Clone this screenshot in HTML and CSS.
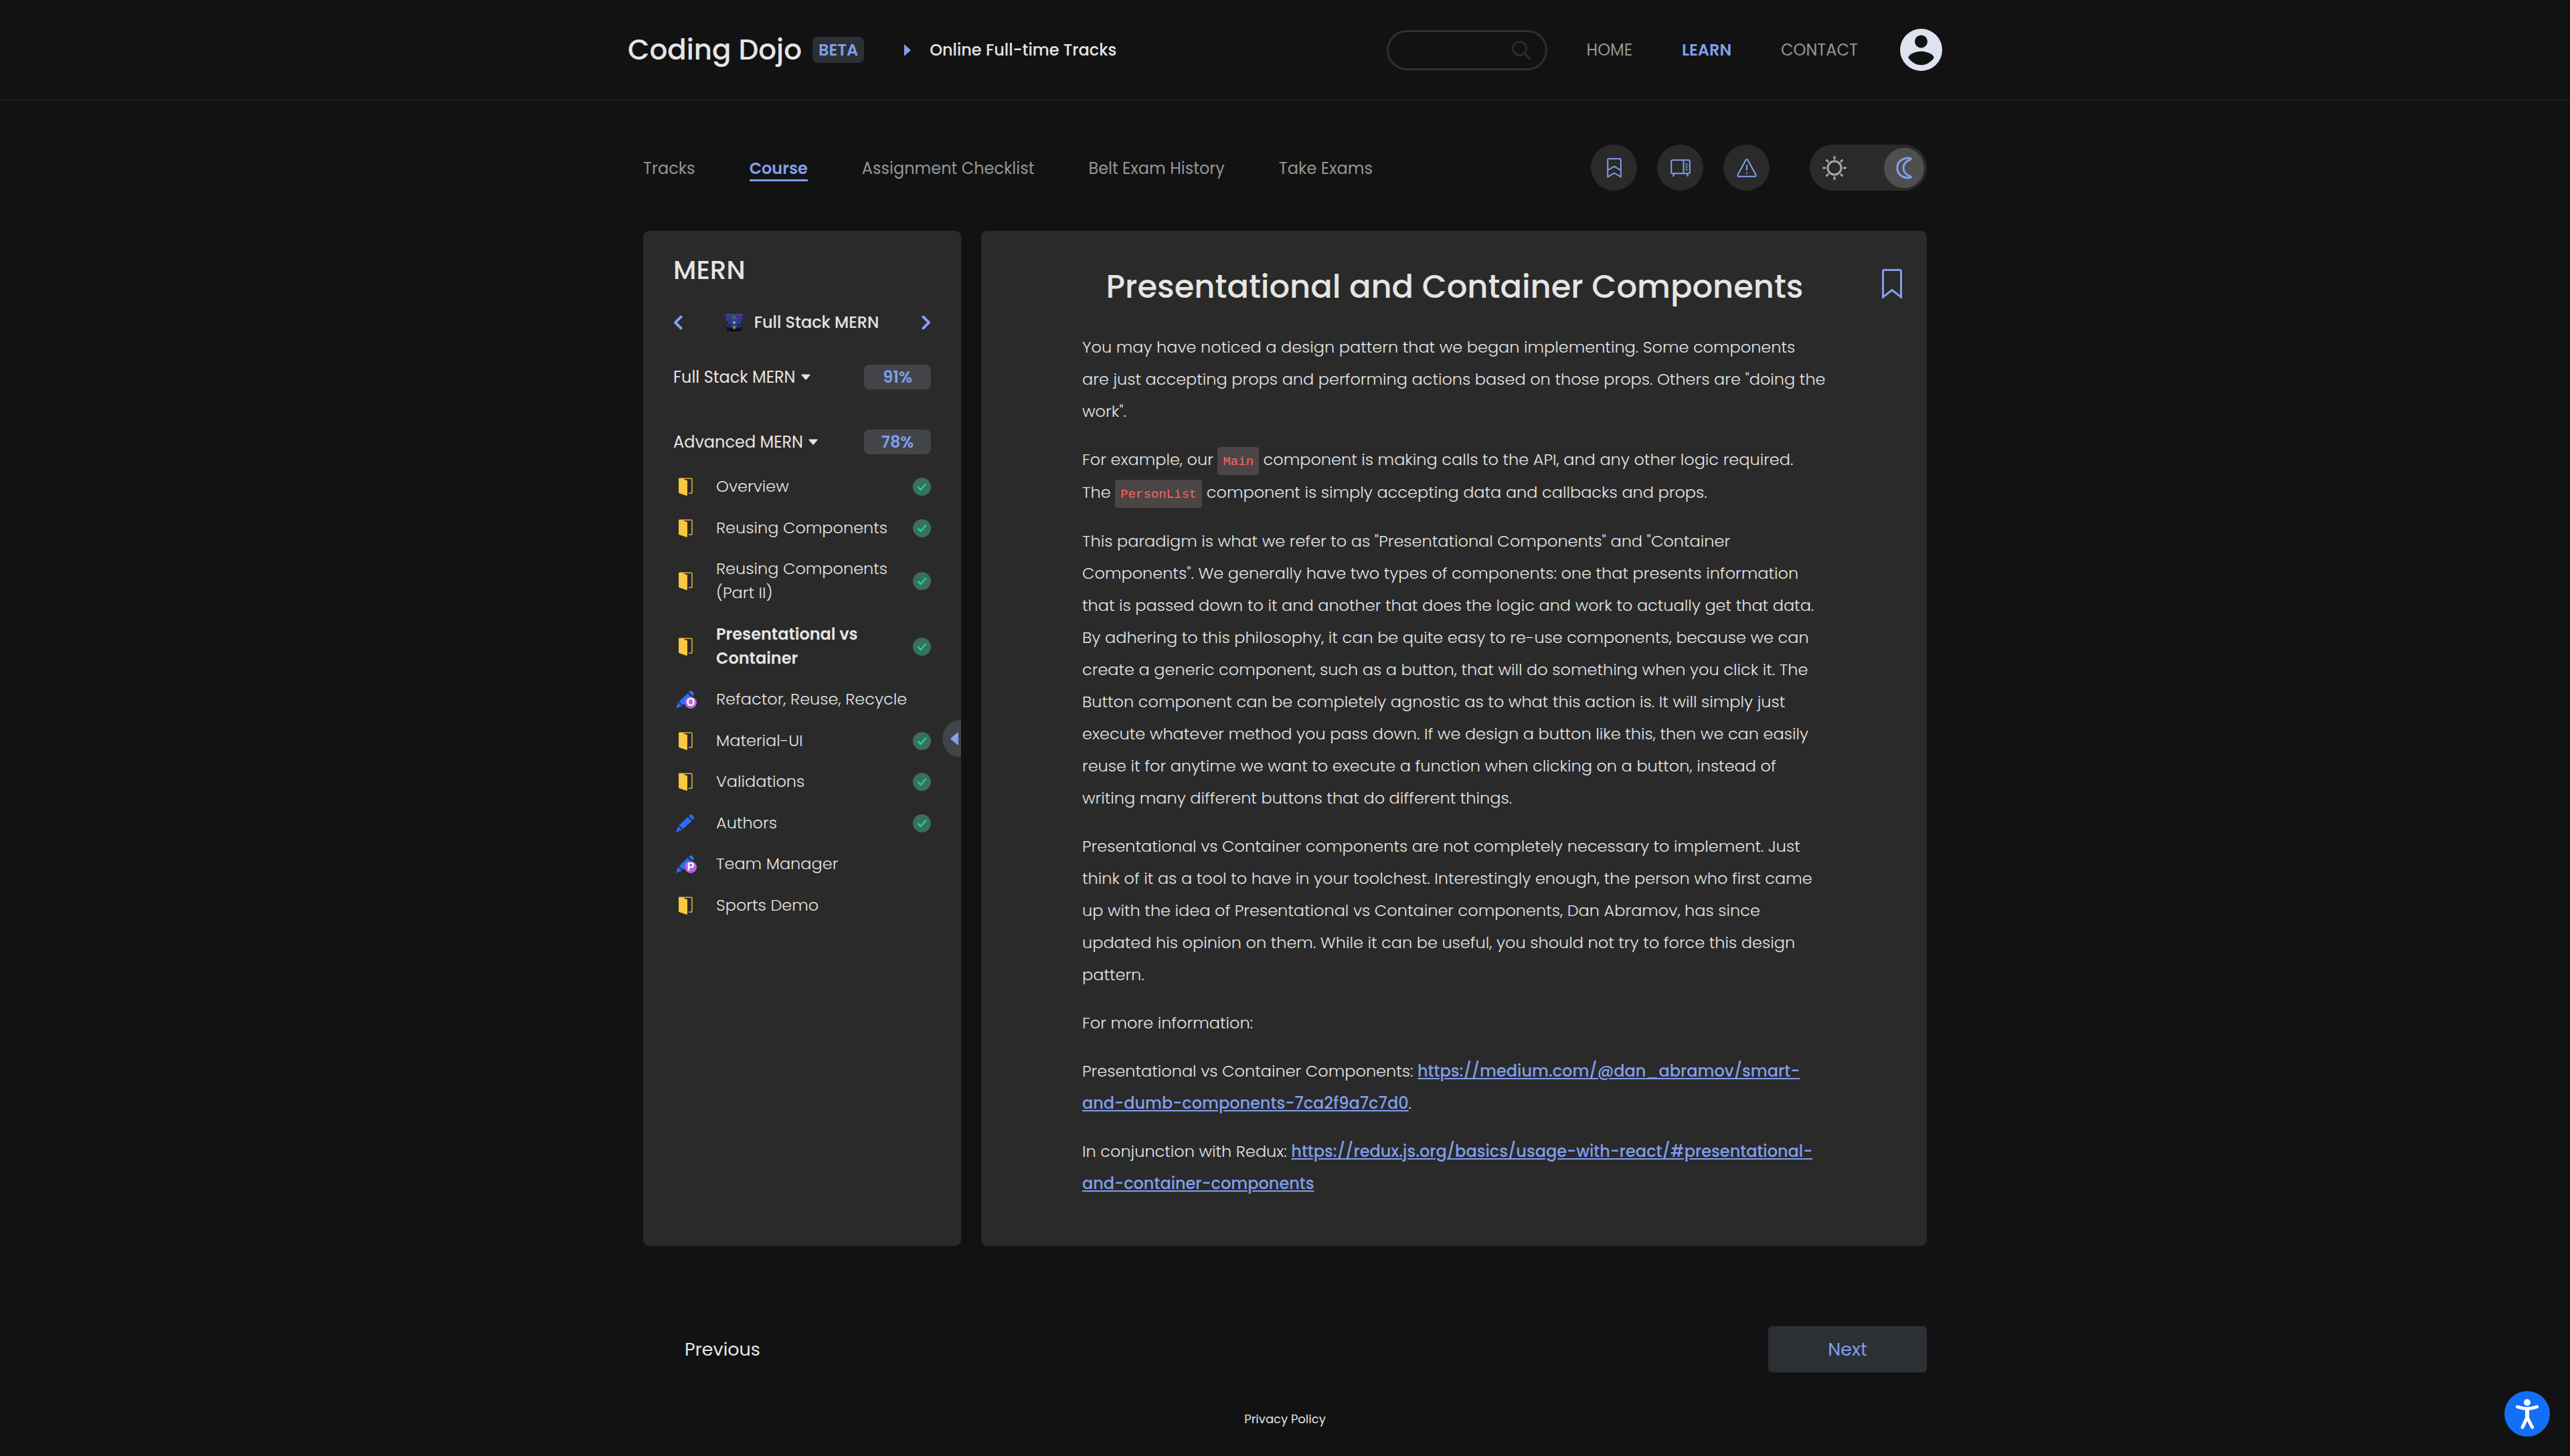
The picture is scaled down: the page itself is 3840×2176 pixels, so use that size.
FILE: index.html
```html
<!DOCTYPE html>
<html lang="en">
<head>
<meta charset="utf-8">
<meta name="viewport" content="width=device-width, initial-scale=1">
<title>Presentational and Container Components</title>
<link rel="stylesheet" href="styles.css">
</head>
<body>
<svg class="sprite" aria-hidden="true">
  <symbol id="door" viewBox="0 0 21 27">
    <path d="M2 1.2h16.800q1.200 0 1.200 1.200v19.500q0 1.300-1.300 1.300h-3.700" fill="none" stroke="#c79a35" stroke-width="1.800"/>
    <path d="M0 1.600Q0 .5 1.200.6L7 1q1 2 3.500 2.400L13 4.200V25.500q0 1.600-1.500 1.200L1.200 23.300Q0 23 0 21.800z" fill="#f9c840"/>
  </symbol>
  <symbol id="pencil" viewBox="0 0 28 28">
    <path d="M4.500 17.500L17.500 5l6 6-13 12z M19 3.600l1.700-1.700q1.500-1.400 3-.1l2.700 2.700q1.400 1.500 0 3l-1.600 1.800z M3.200 18.800l5.700 5.500L.8 27.500Q.2 27.300.4 26.500z" fill="#2d6bfa"/>
  </symbol>
  <symbol id="check" viewBox="0 0 27 27">
    <circle cx="13.500" cy="13.500" r="13.500" fill="#3b6e5f"/>
    <path d="M8 14.200l3.700 3.800 7.300-8.500" fill="none" stroke="#0bdc84" stroke-width="2.600" stroke-linecap="round" stroke-linejoin="round"/>
  </symbol>
</svg>

<header class="site-header">
  <div class="header-inner">
    <a class="brand" href="#">Coding Dojo <span class="beta">BETA</span></a>
    <svg class="crumb-arrow" viewBox="0 0 10 18" width="10" height="18" aria-hidden="true"><path d="M0 0l10 9-10 9z" fill="currentColor"/></svg>
    <span class="crumb">Online Full-time Tracks</span>
    <label class="search">
      <input type="search" aria-label="Search">
      <svg viewBox="0 0 28 28" width="28" height="28" aria-hidden="true"><circle cx="11.500" cy="11.500" r="10" /><path d="M19 19l7.500 7.500"/></svg>
    </label>
    <nav class="site-nav" aria-label="Main">
      <a href="#">HOME</a>
      <a href="#" class="active">LEARN</a>
      <a href="#">CONTACT</a>
    </nav>
    <button class="avatar" type="button" aria-label="Account">
      <svg viewBox="0 0 63 63" width="63" height="63"><circle cx="31.500" cy="31.500" r="31.500" fill="#dee4ef"/><circle cx="31.500" cy="19" r="9.500" fill="#121212"/><path d="M12.500 43.500c0-6.300 12.500-9.700 19-9.700s19 3.400 19 9.700c-4.200 6.200-11 10.700-19 10.700s-14.800-4.500-19-10.700z" fill="#121212"/></svg>
    </button>
  </div>
</header>

<div class="page">
  <div class="toolbar">
    <nav class="tabs" aria-label="Course sections">
      <a href="#">Tracks</a>
      <a href="#" class="active">Course</a>
      <a href="#">Assignment Checklist</a>
      <a href="#">Belt Exam History</a>
      <a href="#">Take Exams</a>
    </nav>
    <div class="tools">
      <button type="button" aria-label="Bookmarks"><svg viewBox="0 0 22 30" width="22" height="30"><path d="M1.200 28.500V3q0-1.800 1.800-1.800h16q1.800 0 1.800 1.800v25.500L11 22.500zM1.200 18.500L11 12.700l9.800 5.800"/></svg></button>
      <button type="button" aria-label="Recordings"><svg viewBox="0 0 30 26" width="30" height="26"><path d="M3 1.200h24q1.800 0 1.800 1.800v16.500q0 1.800-1.800 1.800H3q-1.800 0-1.800-1.800V3q0-1.800 1.800-1.800zM19.500 1.200v20M5.500 21.500L4 25M24.500 21.500L26 25"/><path class="keys" d="M24 6v12"/></svg></button>
      <button type="button" aria-label="Report a problem"><svg viewBox="0 0 30 28" width="30" height="28"><path d="M13.600 2q1.400-1.600 2.800 0l12 22q.7 2.500-1.400 2.800H3q-2.100-.3-1.400-2.800zM15 10v7M15 21.500v.500"/></svg></button>
      <label class="theme">
        <svg class="sun" viewBox="0 0 36 36" width="36" height="36" aria-hidden="true"><circle cx="18" cy="18" r="10"/><path d="M18 1.500v2.500M18 32v2.500M1.500 18H4M32 18h2.500M6.500 6.500l1.700 1.700M27.800 27.800l1.700 1.700M6.500 29.500l1.700-1.700M27.800 8.200l1.700-1.700"/></svg>
        <span class="knob"><input type="checkbox" checked aria-label="Dark mode"><svg viewBox="0 0 24 34" width="24" height="34" aria-hidden="true"><path d="M21.500 2.500C10 .5 1.800 7.500 1.800 17S10 33.500 21.500 31.500q1.500-.8 0-1.800C14.500 27 11 23 11 17S14.500 7 21.500 4.300q1.500-1 0-1.800z"/></svg></span>
      </label>
    </div>
  </div>

  <div class="panels">
    <aside class="sidebar">
      <h2>MERN</h2>
      <div class="course-switch">
        <button type="button" aria-label="Previous course"><svg viewBox="0 0 14 22" width="14" height="22"><path d="M11.500 2.500L3 11l8.500 8.500"/></svg></button>
        <span class="course-name">
          <svg viewBox="0 0 26 27" width="26" height="27" aria-hidden="true">
            <defs><linearGradient id="night" x1="0" y1="0" x2="0" y2="1"><stop offset="0" stop-color="#473d96"/><stop offset=".6" stop-color="#211c55"/><stop offset="1" stop-color="#080618"/></linearGradient></defs>
            <path d="M0 0h26l-2 25q-11 3-22 0z" fill="url(#night)"/>
            <g fill="none" stroke="#31558c" stroke-width="1.200"><ellipse cx="13" cy="13" rx="11" ry="4" transform="rotate(30 13 13)"/><ellipse cx="13" cy="13" rx="11" ry="4" transform="rotate(-30 13 13)"/><ellipse cx="13" cy="13" rx="4" ry="9"/></g>
            <circle cx="13" cy="13" r="2.200" fill="#8fa3d0"/><circle cx="13" cy="5" r="2" fill="#2f8a3c"/><circle cx="13" cy="20.500" r="2.300" fill="#8b8428"/>
          </svg>
          Full Stack MERN
        </span>
        <button type="button" aria-label="Next course"><svg viewBox="0 0 14 22" width="14" height="22"><path d="M2.500 2.500L11 11l-8.500 8.500"/></svg></button>
      </div>

      <div class="module">
        <button type="button" aria-expanded="false">Full Stack MERN <svg viewBox="0 0 14 9" width="14" height="9" aria-hidden="true"><path d="M1 .5h12q1 .3.500 1L8 8Q7 9 6 8L.5 1.500Q0 .8 1 .5z"/></svg></button>
        <span class="percent">91%</span>
      </div>
      <div class="module">
        <button type="button" aria-expanded="true">Advanced MERN <svg viewBox="0 0 14 9" width="14" height="9" aria-hidden="true"><path d="M1 .5h12q1 .3.500 1L8 8Q7 9 6 8L.5 1.500Q0 .8 1 .5z"/></svg></button>
        <span class="percent">78%</span>
      </div>

      <ul class="lessons">
        <li><span class="kind"><svg width="21" height="27"><use href="#door"/></svg></span><a href="#">Overview</a><svg class="done" width="27" height="27"><use href="#check"/></svg></li>
        <li><span class="kind"><svg width="21" height="27"><use href="#door"/></svg></span><a href="#">Reusing Components</a><svg class="done" width="27" height="27"><use href="#check"/></svg></li>
        <li><span class="kind"><svg width="21" height="27"><use href="#door"/></svg></span><a href="#">Reusing Components (Part II)</a><svg class="done" width="27" height="27"><use href="#check"/></svg></li>
        <li class="current"><span class="kind"><svg width="21" height="27"><use href="#door"/></svg></span><a href="#" aria-current="page">Presentational vs Container</a><svg class="done" width="27" height="27"><use href="#check"/></svg></li>
        <li><span class="kind"><svg width="28" height="28"><use href="#pencil"/></svg><b class="tag">O</b></span><a href="#">Refactor, Reuse, Recycle</a></li>
        <li><span class="kind"><svg width="21" height="27"><use href="#door"/></svg></span><a href="#">Material-UI</a><svg class="done" width="27" height="27"><use href="#check"/></svg></li>
        <li><span class="kind"><svg width="21" height="27"><use href="#door"/></svg></span><a href="#">Validations</a><svg class="done" width="27" height="27"><use href="#check"/></svg></li>
        <li><span class="kind"><svg width="28" height="28"><use href="#pencil"/></svg></span><a href="#">Authors</a><svg class="done" width="27" height="27"><use href="#check"/></svg></li>
        <li><span class="kind"><svg width="28" height="28"><use href="#pencil"/></svg><b class="tag">P</b></span><a href="#">Team Manager</a></li>
        <li><span class="kind"><svg width="21" height="27"><use href="#door"/></svg></span><a href="#">Sports Demo</a></li>
      </ul>
      <button class="collapse" type="button" aria-label="Collapse sidebar"><svg viewBox="0 0 12 20" width="12" height="20"><path d="M11 .5q1 0 1 1v17q0 1-1 1L.8 11Q0 10 .8 9z"/></svg></button>
    </aside>

    <main class="lesson">
      <button class="save" type="button" aria-label="Bookmark this page"><svg viewBox="0 0 30 45" width="30" height="45"><path d="M1.500 42V3.500q0-2 2-2h23q2 0 2 2V42L15 31.500z"/></svg></button>
      <h1>Presentational and Container Components</h1>
      <p>You may have noticed a design pattern that we began implementing. Some components<br>are just accepting props and performing actions based on those props. Others are "doing the work".</p>
      <p>For example, our <code>Main</code> component is making calls to the API, and any other logic required.<br>The <code>PersonList</code> component is simply accepting data and callbacks and props.</p>
      <p>This paradigm is what we refer to as "Presentational Components" and "Container Components". We generally have two types of components: one that presents information that is passed down to it and another that does the logic and work to actually get that data. By adhering to this philosophy, it can be quite easy to re-use components, because we can create a generic component, such as a button, that will do something when you click it. The Button component can be completely agnostic as to what this action is. It will simply just execute whatever method you pass down. If we design a button like this, then we can easily reuse it for anytime we want to execute a function when clicking on a button, instead of writing many different buttons that do different things.</p>
      <p>Presentational vs Container components are not completely necessary to implement. Just think of it as a tool to have in your toolchest. Interestingly enough, the person who first came up with the idea of Presentational vs Container components, Dan Abramov, has since updated his opinion on them. While it can be useful, you should not try to force this design pattern.</p>
      <p>For more information:</p>
      <p>Presentational vs Container Components: <a href="https://medium.com/@dan_abramov/smart-and-dumb-components-7ca2f9a7c7d0">https://medium.com/@dan_abramov/smart-and-dumb-components-7ca2f9a7c7d0</a>.</p>
      <p>In conjunction with Redux: <a href="https://redux.js.org/basics/usage-with-react/#presentational-and-container-components">https://redux.js.org/basics/usage-with-react/#presentational-and-container-components</a></p>
    </main>
  </div>

  <nav class="pager" aria-label="Lesson">
    <button type="button">Previous</button>
    <button type="button" class="next">Next</button>
  </nav>
</div>

<footer><a href="#">Privacy Policy</a></footer>

<button class="a11y" type="button" aria-label="Accessibility options">
  <svg viewBox="0 0 68 68" width="68" height="68"><circle cx="34" cy="34" r="34" fill="#146ff8"/><circle cx="34" cy="17" r="5" fill="#fff"/><path d="M19.500 23.500Q34 29 48.500 23.500M34 28v11L27 54M34 39l7.500 15" fill="none" stroke="#fff" stroke-width="5" stroke-linecap="round" stroke-linejoin="round"/><path d="M31 27h6v13h-6z" fill="#fff"/></svg>
</button>
</body>
</html>
```
FILE: styles.css
```css
:root {
  --bg: #121212;
  --panel: #2a2a2a;
  --slate: #2c2f34;
  --chip: #424448;
  --text: #e5e5e5;
  --muted: #969696;
  --blue: #809fec;
}

* { box-sizing: border-box; }

body {
  margin: 0;
  background: var(--bg);
  color: var(--text);
  font: 400 24px/36px Poppins, Inter, sans-serif;
}

a { color: inherit; text-decoration: none; }

button {
  padding: 0;
  border: 0;
  background: none;
  color: inherit;
  font: inherit;
  cursor: pointer;
}

svg { display: block; flex: none; }

.sprite { position: absolute; width: 0; height: 0; }

/* Header */
.site-header { border-bottom: 1px solid #212224; }

.header-inner {
  display: flex;
  align-items: center;
  max-width: 1964px;
  height: 149px;
  margin: 0 auto;
}

.brand {
  display: flex;
  align-items: center;
  gap: 16px;
  font-size: 42px;
  font-weight: 500;
}

.beta {
  padding: 0 9px;
  border-radius: 8px;
  background: var(--slate);
  color: var(--blue);
  font-size: 24px;
  font-weight: 600;
  line-height: 39px;
}

.crumb-arrow { margin: 0 28px 0 60px; color: var(--blue); }

.crumb { font-weight: 500; }

.search {
  display: flex;
  align-items: center;
  width: 240px;
  height: 60px;
  margin: 0 59px 0 auto;
  padding: 0 22px 0 24px;
  border: 3px solid var(--slate);
  border-radius: 30px;
}

.search input {
  flex: 1;
  min-width: 0;
  border: 0;
  outline: 0;
  background: none;
  color: var(--text);
  font: inherit;
}

.search svg { fill: none; stroke: #2c2c2c; stroke-width: 3; stroke-linecap: round; }

.site-nav { display: flex; gap: 74px; margin-right: 63px; color: var(--muted); }
.site-nav .active { color: var(--blue); font-weight: 600; }

/* Tabs and tools */
.page { max-width: 1918px; margin: 0 auto; }

.toolbar {
  display: flex;
  align-items: center;
  justify-content: space-between;
  margin: 66px 0 60px;
}

.tabs { display: flex; gap: 81px; padding-top: 2px; color: var(--muted); }
.tabs a { border: solid transparent; border-width: 3px 0; line-height: 32px; }
.tabs .active { border-bottom-color: var(--blue); color: var(--blue); font-weight: 600; }

.tools { display: flex; gap: 30px; }

.tools button {
  display: grid;
  place-items: center;
  width: 69px;
  height: 69px;
  border-radius: 50%;
  background: var(--panel);
}

.tools svg { fill: none; stroke: var(--blue); stroke-width: 2; stroke-linejoin: round; stroke-linecap: round; }
.tools .keys { stroke-width: 3; stroke-dasharray: 3 1; stroke-linecap: butt; opacity: .7; }

.theme {
  display: flex;
  align-items: center;
  justify-content: space-between;
  width: 175px;
  height: 69px;
  margin-left: 30px;
  padding: 0 4px 0 19px;
  border-radius: 35px;
  background: var(--panel);
}

.theme .sun { stroke: #a8a8a8; stroke-width: 3; }
.knob { display: grid; place-items: center; }
.knob > * { grid-area: 1 / 1; }
.theme .knob svg { stroke-width: 3; }

.knob input {
  width: 60px;
  height: 60px;
  margin: 0;
  border-radius: 50%;
  background: #4f4f4f;
  appearance: none;
}

/* Panels */
.panels {
  display: grid;
  grid-template-columns: 475px 1fr;
  gap: 30px;
}

.sidebar, .lesson {
  position: relative;
  border-radius: 9px;
  background: var(--panel);
}

.sidebar { overflow: hidden; padding: 30px 45px; }

.sidebar h2 { margin: 0 0 32px; font-size: 39px; font-weight: 500; line-height: 57px; }

.course-switch { display: flex; align-items: center; justify-content: space-between; margin-bottom: 45px; font-weight: 500; }
.course-switch button svg { fill: none; stroke: var(--blue); stroke-width: 4; stroke-linecap: round; stroke-linejoin: round; }
.course-name { display: flex; align-items: center; gap: 17px; }

.module { display: flex; align-items: center; justify-content: space-between; height: 37px; }
.module + .module { margin-top: 60px; }
.module button { display: flex; align-items: center; gap: 8px; }
.module svg { fill: var(--text); }

.percent {
  width: 100px;
  border-radius: 8px;
  background: var(--chip);
  color: var(--blue);
  font-weight: 600;
  line-height: 37px;
  text-align: center;
}

.lessons { margin: 17px 0 0; padding: 0; list-style: none; font-weight: 300; }
.lessons li { display: flex; align-items: center; padding: 13px 0; }
.lessons li:nth-child(even) { padding-bottom: 12px; }
.lessons a { width: 288px; }
.lessons .current a { font-weight: 600; }
.done { margin-left: auto; }

.kind { position: relative; display: grid; flex: none; place-items: center; width: 36px; margin-right: 28px; }

.tag {
  position: absolute;
  right: 1px;
  bottom: 0;
  width: 18px;
  border-radius: 50%;
  background: #b565dd;
  color: #fff;
  font: 700 16px/18px "Liberation Sans", sans-serif;
  text-align: center;
}

.collapse {
  position: absolute;
  top: 50%;
  right: -28px;
  width: 56px;
  height: 56px;
  margin-top: -28px;
  padding-left: 12px;
  border-radius: 50%;
  background: var(--chip);
}

.collapse svg { fill: var(--blue); }

/* Lesson text */
.lesson { padding: 48px 149px 69px 151px; }

.lesson h1 { margin: 0 0 30px; font-size: 48px; font-weight: 500; line-height: 72px; text-align: center; }

.lesson p { margin: 0 0 24px; font-weight: 300; line-height: 48px; }
.lesson p:last-child { margin-bottom: 0; }
.lesson p a { color: var(--blue); font-weight: 500; text-decoration: underline; }

.lesson code {
  padding: 11px 8px 9px;
  border-radius: 4px;
  background: #4b4545;
  color: #ff6466;
  font: 19px/44px "Liberation Mono", monospace;
}

.save { position: absolute; top: 57px; right: 37px; }
.save svg { fill: none; stroke: var(--blue); stroke-width: 3; }

/* Pager and footer */
.pager { display: flex; justify-content: space-between; margin-top: 120px; }
.pager button { width: 237px; height: 69px; border-radius: 6px; font-size: 27px; }
.pager .next { background: var(--slate); color: var(--blue); }

footer { padding: 56px 0 41px; font-size: 18px; line-height: 28px; text-align: center; }

.a11y { position: fixed; right: 30px; bottom: 29px; }
```
